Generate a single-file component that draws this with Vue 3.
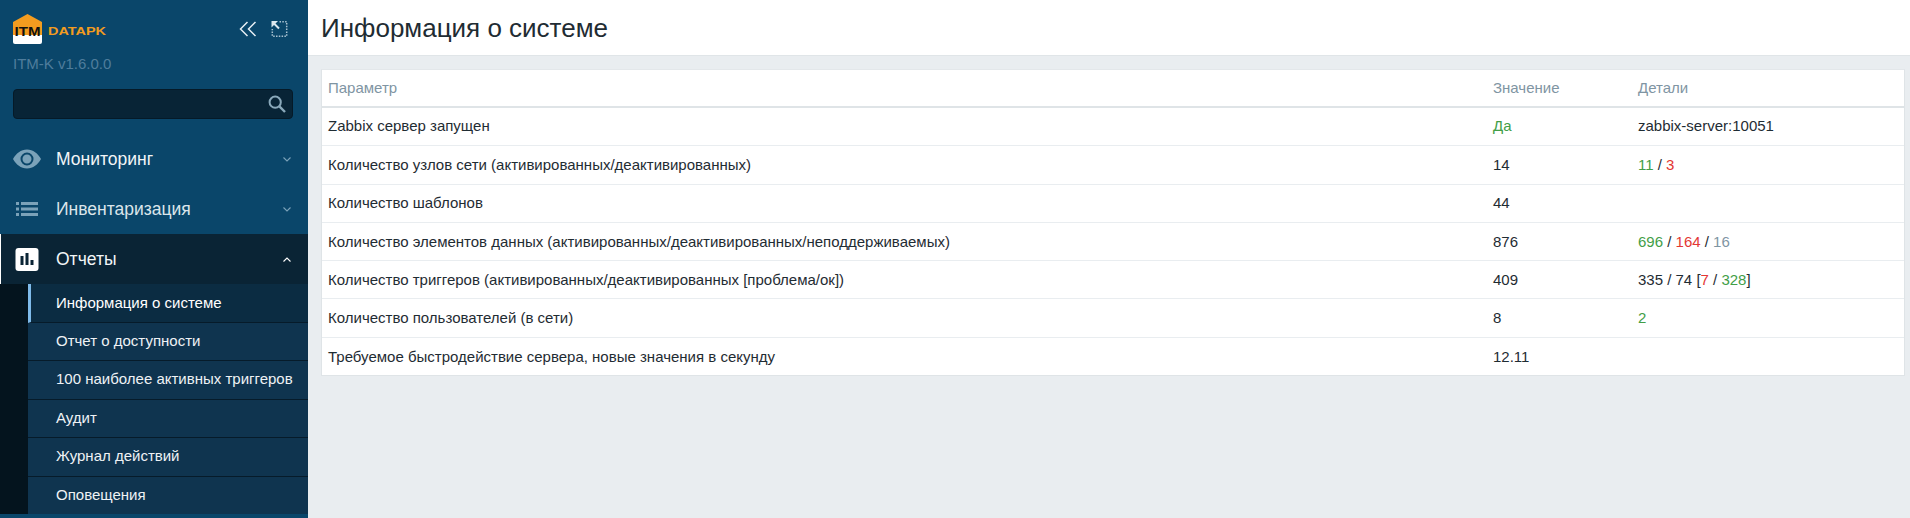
<script setup>
const rows = [
  { name: 'Zabbix сервер запущен', value: 'Да', valueClass: 'ok', details: [{ t: 'zabbix-server:10051' }] },
  {
    name: 'Количество узлов сети (активированных/деактивированных)',
    value: '14',
    details: [{ t: '11', c: 'ok' }, { t: ' / ' }, { t: '3', c: 'bad' }]
  },
  { name: 'Количество шаблонов', value: '44', details: [] },
  {
    name: 'Количество элементов данных (активированных/деактивированных/неподдерживаемых)',
    value: '876',
    details: [{ t: '696', c: 'ok' }, { t: ' / ' }, { t: '164', c: 'bad' }, { t: ' / ' }, { t: '16', c: 'muted' }]
  },
  {
    name: 'Количество триггеров (активированных/деактивированных [проблема/ок])',
    value: '409',
    details: [{ t: '335 / 74 [' }, { t: '7', c: 'bad' }, { t: ' / ' }, { t: '328', c: 'ok' }, { t: ']' }]
  },
  { name: 'Количество пользователей (в сети)', value: '8', details: [{ t: '2', c: 'ok' }] },
  { name: 'Требуемое быстродействие сервера, новые значения в секунду', value: '12.11', details: [] }
]

const subItems = [
  'Информация о системе',
  'Отчет о доступности',
  '100 наиболее активных триггеров',
  'Аудит',
  'Журнал действий',
  'Оповещения'
]
</script>

<template>
  <div class="layout">
    <aside class="sidebar">
      <div class="brand">
        <svg class="logo" width="94" height="30" viewBox="0 0 94 30">
          <path d="M0 8 L14.5 0 L29 8 V21 H0 Z" fill="#f39c1f" />
          <path d="M0 21 H29 V28 Q29 30 27 30 H2 Q0 30 0 28 Z" fill="#fff" />
          <text x="1.5" y="22" textLength="26" lengthAdjust="spacingAndGlyphs" class="logo-itm">ITM</text>
          <text x="35" y="21" textLength="58" lengthAdjust="spacingAndGlyphs" class="logo-text">DATAPK</text>
        </svg>
        <div class="brand-tools">
          <svg width="18" height="16" viewBox="0 0 18 16" fill="none" stroke="#e6eef3" stroke-width="1.5">
            <path d="M8.5 1 L1.5 8 L8.5 15" />
            <path d="M16.5 1 L9.5 8 L16.5 15" />
          </svg>
          <svg width="17" height="16" viewBox="0 0 16 16" fill="none" stroke="#a9c2d1" stroke-width="1.5">
            <path d="M8 .8 H15.2 V15.2 H.8 V8" stroke-dasharray="1.5 1.3" />
            <path d="M2 2 L7.5 7.5" stroke="#dce8ef" stroke-width="2" />
            <path d="M0 0 H6.5 L0 6.5 Z" fill="#dce8ef" stroke="none" />
          </svg>
        </div>
      </div>
      <div class="version">ITM-K v1.6.0.0</div>
      <div class="search">
        <svg width="18" height="18" viewBox="0 0 18 18" fill="none" stroke="#8aa9bb" stroke-width="2">
          <circle cx="7.2" cy="7.2" r="5.6" />
          <path d="M11.4 11.4 L17 17" stroke-width="2.4" />
        </svg>
      </div>

      <nav class="nav">
        <div class="nav-item">
          <svg class="nav-icon" width="28" height="20" viewBox="0 0 28 20">
            <path
              fill="#7ba2b9"
              fill-rule="evenodd"
              d="M14 .5 C20 .5 25 4.5 28 10 C25 15.5 20 19.5 14 19.5 C8 19.5 3 15.5 0 10 C3 4.5 8 .5 14 .5 Z M14 3.5 A6.5 6.5 0 1 0 14 16.5 A6.5 6.5 0 1 0 14 3.5 Z M14 5.5 A4.5 4.5 0 1 1 14 14.5 A4.5 4.5 0 1 1 14 5.5 Z"
            />
          </svg>
          <span class="nav-label">Мониторинг</span>
          <svg class="chevron" width="8" height="5" viewBox="0 0 8 5" fill="none" stroke="#7ba2b9" stroke-width="1.1">
            <path d="M.5 .5 L4 4 L7.5 .5" />
          </svg>
        </div>
        <div class="nav-item">
          <svg class="nav-icon" width="28" height="14" viewBox="0 0 28 14" fill="#7ba2b9">
            <rect x="3" y="0" width="3" height="3" />
            <rect x="3" y="5.5" width="3" height="3" />
            <rect x="3" y="11" width="3" height="3" />
            <rect x="8" y="0" width="17" height="3" />
            <rect x="8" y="5.5" width="17" height="3" />
            <rect x="8" y="11" width="17" height="3" />
          </svg>
          <span class="nav-label dim">Инвентаризация</span>
          <svg class="chevron" width="8" height="5" viewBox="0 0 8 5" fill="none" stroke="#7ba2b9" stroke-width="1.1">
            <path d="M.5 .5 L4 4 L7.5 .5" />
          </svg>
        </div>
        <div class="nav-item open">
          <svg class="nav-icon" width="23" height="23" viewBox="0 0 23 23">
            <rect width="23" height="23" rx="3" fill="#fff" />
            <rect x="5" y="8" width="3" height="9" fill="#0a2435" />
            <rect x="10" y="5" width="3" height="12" fill="#0a2435" />
            <rect x="15" y="12" width="3" height="5" fill="#0a2435" />
          </svg>
          <span class="nav-label">Отчеты</span>
          <svg class="chevron" width="8" height="5" viewBox="0 0 8 5" fill="none" stroke="#fff" stroke-width="1.1">
            <path d="M.5 4.5 L4 1 L7.5 4.5" />
          </svg>
        </div>
        <ul class="sub">
          <li v-for="(item, i) in subItems" :key="item" :class="{ active: i === 0 }">{{ item }}</li>
        </ul>
      </nav>
    </aside>

    <main class="main">
      <header class="page-head">
        <h1>Информация о системе</h1>
      </header>
      <div class="content">
        <table class="info">
          <colgroup>
            <col class="c1" />
            <col class="c2" />
            <col />
          </colgroup>
          <thead>
            <tr>
              <th>Параметр</th>
              <th>Значение</th>
              <th>Детали</th>
            </tr>
          </thead>
          <tbody>
            <tr v-for="row in rows" :key="row.name">
              <td>{{ row.name }}</td>
              <td :class="row.valueClass">{{ row.value }}</td>
              <td>
                <span v-for="(d, i) in row.details" :key="i" :class="d.c">{{ d.t }}</span>
              </td>
            </tr>
          </tbody>
        </table>
      </div>
    </main>
  </div>
</template>

<style>
html,
body {
  margin: 0;
  overflow: hidden;
}
</style>

<style scoped>
.layout {
  display: flex;
  height: 518px;
  font-family: 'Liberation Sans', Arial, sans-serif;
  font-size: 15px;
  color: #1f2c33;
  overflow: hidden;
}

.sidebar {
  width: 308px;
  flex: none;
  background: #0a466a;
  color: #f2f5f7;
}

.brand {
  display: flex;
  justify-content: space-between;
  padding: 14px 20px 0 13px;
  height: 44px;
  box-sizing: border-box;
}
.logo-itm {
  font: bold 12.5px 'Liberation Sans', Arial, sans-serif;
  fill: #111;
}
.logo-text {
  font: bold 11px 'Liberation Sans', Arial, sans-serif;
  fill: #f39c1f;
}
.brand-tools {
  display: flex;
  gap: 14px;
  padding-top: 7px;
}

.version {
  margin: 11px 13px 0;
  font-size: 15px;
  line-height: 18px;
  color: #4f7d9c;
}

.search {
  margin: 16px 15px 0 13px;
  height: 30px;
  box-sizing: border-box;
  background: #082436;
  border: 1px solid #051a28;
  border-radius: 4px;
  display: flex;
  align-items: center;
  justify-content: flex-end;
  padding-right: 6px;
}

.nav {
  margin-top: 15px;
}
.nav-item {
  display: flex;
  align-items: center;
  height: 50px;
  padding-left: 13px;
  padding-right: 17px;
  font-size: 17.5px;
}
.nav-icon {
  width: 28px;
  margin-right: 15px;
  flex: none;
}
.nav-label {
  flex: 1;
}
.nav-label.dim {
  color: #dbe5ea;
}
.nav-item.open {
  background: #0a2435;
  border-left: 1px solid #fff;
  padding-left: 12px;
}

.sub {
  list-style: none;
  margin: 0;
  padding: 0 0 0 28px;
  background: #04141e;
  font-size: 15px;
}
.sub li {
  height: 37.5px;
  line-height: 36.4px;
  padding-left: 28px;
  background: #0f344f;
  border-bottom: 1px solid #061b2a;
  color: #eef2f5;
}
.sub li.active {
  background: #0b2c42;
  border-left: 3px solid #7fbbea;
  padding-left: 25px;
  line-height: 37.5px;
  color: #fff;
}
.sub li:last-child {
  border-bottom: 0;
}

.main {
  flex: 1;
  min-width: 0;
  background: #e9edf0;
}
.page-head {
  height: 56px;
  box-sizing: border-box;
  background: #fff;
  border-bottom: 1px solid #e0e5e8;
  padding: 2px 0 0 13px;
  display: flex;
  align-items: center;
}
h1 {
  margin: 0;
  font-size: 26px;
  font-weight: 400;
  color: #1f2c33;
}

.content {
  padding: 13px 5px 0 13px;
}

.info {
  width: 100%;
  table-layout: fixed;
  border-collapse: separate;
  border-spacing: 0;
  background: #fff;
  border: 1px solid #dfe4e7;
  border-top-color: #e3e7ea;
}
.c1 {
  width: 1165px;
}
.c2 {
  width: 145px;
}
th {
  height: 35px;
  padding: 0 6px 1px;
  text-align: left;
  font-weight: 400;
  color: #7f95a3;
  border-bottom: 2px solid #dfe4e7;
}
td {
  height: 36.7px;
  padding: 0 6px 0.6px;
  border-top: 1px solid #e9edf0;
}
tbody tr:first-child td {
  border-top: 0;
  height: 35.3px;
  padding-bottom: 2px;
}
.ok {
  color: #429e47;
}
.bad {
  color: #e33734;
}
.muted {
  color: #7f95a3;
}
</style>
